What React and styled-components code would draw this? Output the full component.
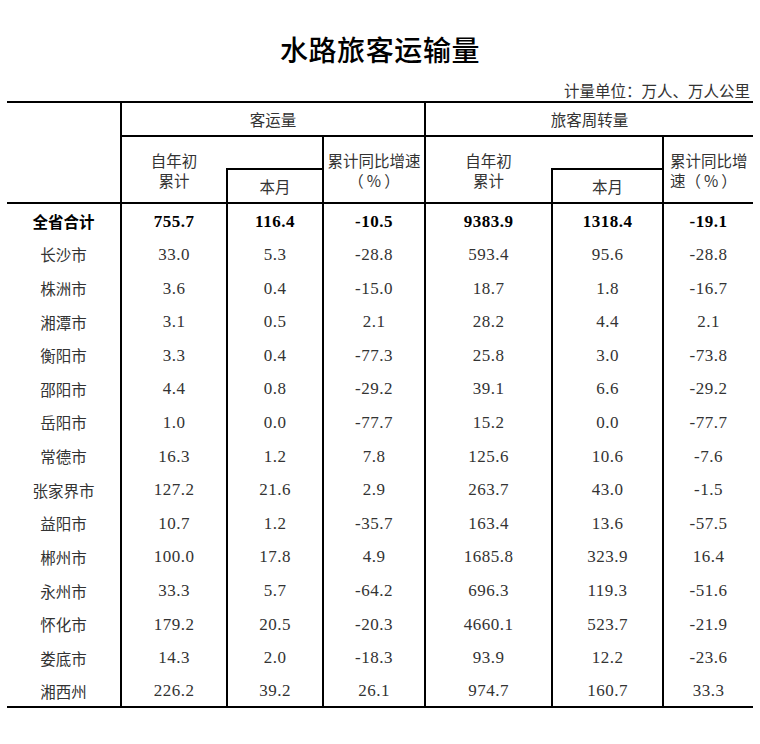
import React from "react";
import styled, { createGlobalStyle } from "styled-components";

const Global = createGlobalStyle`
  html, body { margin: 0; padding: 0; background: #fff; }
  body {
    font-family: "Noto Sans CJK SC", "Noto Sans", sans-serif;
    color: #333;
    text-spacing-trim: space-all;
  }
`;

const Page = styled.div`
  width: 760px;
  padding: 29px 7px 0 7px;
  box-sizing: border-box;
`;

const Title = styled.h1`
  margin: 0;
  text-align: center;
  font-family: "Noto Sans CJK SC", sans-serif;
  font-size: 28px;
  font-weight: 500;
  letter-spacing: 0.6px;
  line-height: 40px;
  color: #000;
`;

const Unit = styled.div`
  margin-top: 11px;
  margin-bottom: 1px;
  text-align: right;
  padding-right: 3px;
  font-size: 15.5px;
  line-height: 20px;
  color: #333;
`;

const Table = styled.table`
  width: 746px;
  border-collapse: collapse;
  table-layout: fixed;
  border-top: 2px solid #000;
  border-bottom: 2px solid #000;
`;

const Col = styled.col`
  width: ${(p) => p.$w}px;
`;

const HeadRow = styled.tr`
  height: ${(p) => p.$h}px;
`;

const Th = styled.th`
  padding: 0;
  font-weight: 400;
  font-size: 15.5px;
  line-height: 20px;
  color: #333;
  text-align: ${(p) => (p.$left ? "left" : "center")};
  padding-left: ${(p) => (p.$left ? "6px" : "0")};
  vertical-align: middle;
  border-left: ${(p) => (p.$bl ? "2px solid #000" : "none")};
  border-bottom: ${(p) => (p.$bb ? "2px solid #000" : "none")};
`;

const Pct = styled.span`
  padding: 0 3px;
`;

const Row = styled.tr`
  height: 33.62px;
`;

const Td = styled.td`
  padding: 0;
  text-align: center;
  vertical-align: middle;
  border-left: ${(p) => (p.$bl ? "2px solid #000" : "none")};
  border-top: ${(p) => (p.$first ? "2px solid #000" : "none")};
  color: ${(p) => (p.$bold ? "#000" : "#333")};
  font-weight: ${(p) => (p.$bold ? 700 : 400)};
`;

const Name = styled(Td)`
  font-family: "Noto Sans CJK SC", sans-serif;
  font-size: 15.5px;
  padding-top: 2px;
`;

const Num = styled(Td)`
  font-family: "Liberation Serif", "Noto Sans CJK SC", serif;
  font-size: 17px;
  letter-spacing: 0.5px;
  padding-top: 3px;
`;

const rows = [
  ["全省合计", "755.7", "116.4", "-10.5", "9383.9", "1318.4", "-19.1"],
  ["长沙市", "33.0", "5.3", "-28.8", "593.4", "95.6", "-28.8"],
  ["株洲市", "3.6", "0.4", "-15.0", "18.7", "1.8", "-16.7"],
  ["湘潭市", "3.1", "0.5", "2.1", "28.2", "4.4", "2.1"],
  ["衡阳市", "3.3", "0.4", "-77.3", "25.8", "3.0", "-73.8"],
  ["邵阳市", "4.4", "0.8", "-29.2", "39.1", "6.6", "-29.2"],
  ["岳阳市", "1.0", "0.0", "-77.7", "15.2", "0.0", "-77.7"],
  ["常德市", "16.3", "1.2", "7.8", "125.6", "10.6", "-7.6"],
  ["张家界市", "127.2", "21.6", "2.9", "263.7", "43.0", "-1.5"],
  ["益阳市", "10.7", "1.2", "-35.7", "163.4", "13.6", "-57.5"],
  ["郴州市", "100.0", "17.8", "4.9", "1685.8", "323.9", "16.4"],
  ["永州市", "33.3", "5.7", "-64.2", "696.3", "119.3", "-51.6"],
  ["怀化市", "179.2", "20.5", "-20.3", "4660.1", "523.7", "-21.9"],
  ["娄底市", "14.3", "2.0", "-18.3", "93.9", "12.2", "-23.6"],
  ["湘西州", "226.2", "39.2", "26.1", "974.7", "160.7", "33.3"],
];

const widths = [114, 106, 96, 102, 127, 111, 90];

export default function App() {
  return (
    <>
      <Global />
      <Page>
        <Title>水路旅客运输量</Title>
        <Unit>计量单位：万人、万人公里</Unit>
        <Table>
          <colgroup>
            {widths.map((w, i) => (
              <Col key={i} $w={w} />
            ))}
          </colgroup>
          <thead>
            <HeadRow $h={34}>
              <Th rowSpan={3} />
              <Th colSpan={3} $bl $bb>客运量</Th>
              <Th colSpan={3} $bl $bb>旅客周转量</Th>
            </HeadRow>
            <HeadRow $h={33}>
              <Th rowSpan={2} $bl>自年初<br />累计</Th>
              <Th $bb />
              <Th rowSpan={2} $bl>累计同比增速<br />（<Pct>%</Pct>）</Th>
              <Th rowSpan={2} $bl>自年初<br />累计</Th>
              <Th $bb />
              <Th rowSpan={2} $bl $left>累计同比增<br />速（<Pct>%</Pct>）</Th>
            </HeadRow>
            <HeadRow $h={34}>
              <Th $bl>本月</Th>
              <Th $bl>本月</Th>
            </HeadRow>
          </thead>
          <tbody>
            {rows.map((r, i) => {
              const bold = i === 0;
              const first = i === 0;
              return (
                <Row key={r[0]}>
                  <Name $bold={bold} $first={first}>{r[0]}</Name>
                  {r.slice(1).map((v, j) => (
                    <Num key={j} $bl $bold={bold} $first={first}>
                      {v}
                    </Num>
                  ))}
                </Row>
              );
            })}
          </tbody>
        </Table>
      </Page>
    </>
  );
}
